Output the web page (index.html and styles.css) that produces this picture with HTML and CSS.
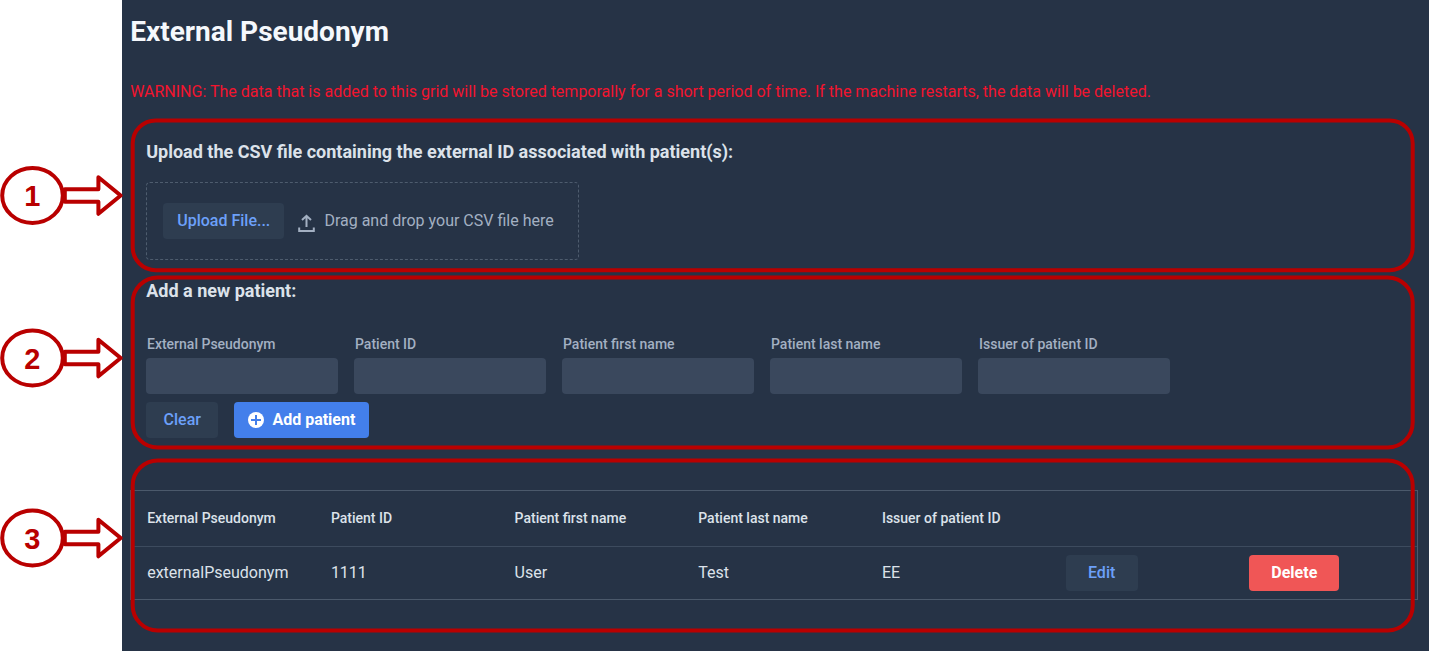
FILE: index.html
```
<!DOCTYPE html>
<html lang="en">
<head>
<meta charset="utf-8">
<title>External Pseudonym</title>
<link rel="stylesheet" href="styles.css">
</head>
<body>
<div class="page">
  <main class="panel">
    <h1 class="title">External Pseudonym</h1>
    <p class="warning">WARNING: The data that is added to this grid will be stored temporally for a short period of time. If the machine restarts, the data will be deleted.</p>
    <section class="upload">
      <h2 class="heading">Upload the CSV file containing the external ID associated with patient(s):</h2>
      <div class="dropzone">
        <button class="btn upload-btn">Upload File...</button>
        <svg class="upload-icon" width="18" height="18" viewBox="0 0 18 18" fill="none" stroke="currentColor" stroke-width="2"><path d="M8.5 13V2M4 6L8.5 1.8L13 6M1.2 13.4V17H15.8V13.4"/></svg>
        <span class="drop-label">Drag and drop your CSV file here</span>
      </div>
    </section>
    <section class="add">
      <h2 class="heading">Add a new patient:</h2>
      <div class="fields">
        <label class="field"><span>External Pseudonym</span><input class="input"></label>
        <label class="field"><span>Patient ID</span><input class="input"></label>
        <label class="field"><span>Patient first name</span><input class="input"></label>
        <label class="field"><span>Patient last name</span><input class="input"></label>
        <label class="field"><span>Issuer of patient ID</span><input class="input"></label>
      </div>
      <div class="actions">
        <button class="btn clear-btn">Clear</button>
        <button class="btn primary"><svg class="plus-icon" width="16" height="16" viewBox="0 0 16 16"><circle cx="8" cy="8" r="8" fill="#fff"/><path d="M8 3V13M3 8H13" stroke="#437feb" stroke-width="2"/></svg><span>Add patient</span></button>
      </div>
    </section>
    <div class="grid">
      <div class="row head"><span>External Pseudonym</span><span>Patient ID</span><span>Patient first name</span><span>Patient last name</span><span>Issuer of patient ID</span></div>
      <div class="row body"><span>externalPseudonym</span><span>1111</span><span>User</span><span>Test</span><span>EE</span><button class="btn edit-btn">Edit</button><button class="btn delete-btn">Delete</button></div>
    </div>
  </main>
  <svg class="annotations" width="1430" height="653" viewBox="0 0 1430 653">
    <defs>
      <g id="pointer">
        <ellipse cx="32.5" cy="0" rx="30.3" ry="27.4"/>
        <path d="M64.8 -6.3H98.4V-18.3L120.7 0L98.4 18.3V6.3H64.8Z"/>
      </g>
    </defs>
    <rect x="132.7" y="120.4" width="1280" height="149.8" rx="23"/>
    <rect x="132.7" y="277.4" width="1280" height="170" rx="25"/>
    <rect x="132.7" y="460.4" width="1280" height="170" rx="25"/>
    <use href="#pointer" y="195.5"/>
    <use href="#pointer" y="358"/>
    <use href="#pointer" y="538"/>
    <text x="32.3" y="206">1</text>
    <text x="32.3" y="369">2</text>
    <text x="32.3" y="549">3</text>
  </svg>
</div>
</body>
</html>
```
FILE: styles.css
```
body {
  margin: 0;
  background: #fff;
  font-family: Roboto, "Liberation Sans", sans-serif;
  font-size: 16px;
}

.page {
  position: relative;
  width: 1430px;
  height: 653px;
  overflow: hidden;
}

.panel {
  box-sizing: border-box;
  width: 1307px;
  height: 651px;
  margin-left: 122px;
  padding: 14px 11px 0 8px;
  background: #263346;
  color: #dce2ea;
}

.title {
  margin: 0;
  padding-left: 0.2px;
  color: #f5f8fc;
  font-size: 28px;
  font-weight: 700;
  line-height: 35px;
}

.warning {
  margin: 30px 0 0;
  padding-left: 0.2px;
  color: #f3142e;
  line-height: 26px;
}

.upload {
  padding: 35px 16px 0;
}

.heading {
  margin: 0;
  padding-left: 0.2px;
  font-size: 18px;
  font-weight: 700;
  line-height: 24px;
}

.dropzone {
  box-sizing: border-box;
  display: flex;
  align-items: center;
  width: 433px;
  height: 78px;
  margin-top: 18px;
  padding: 0 16px;
  border: 1px dashed #4e5c6e;
  border-radius: 4px;
  color: #a3b0c2;
}

.btn {
  box-sizing: border-box;
  display: flex;
  align-items: center;
  justify-content: center;
  height: 36px;
  padding: 0 0 2px;
  border: 0;
  border-radius: 4px;
  background: #2e3d50;
  color: #6ca0f9;
  font: 500 16px Roboto, "Liberation Sans", sans-serif;
}

.upload-btn {
  width: 121px;
  padding-left: 0.5px;
}

.upload-icon {
  margin: 4px 8.4px 0 14px;
}

.drop-label {
  padding-bottom: 2px;
}

.add {
  padding: 19px 16px 0;
}

.fields {
  display: flex;
  gap: 16px;
  margin-top: 32px;
}

.field {
  display: flex;
  flex-direction: column;
  gap: 5px;
  width: 192px;
  color: #a3b0c2;
  font-size: 14px;
  font-weight: 500;
  line-height: 18px;
}

.field span {
  padding-left: 1px;
}

.input {
  box-sizing: border-box;
  width: 100%;
  height: 36px;
  border: 0;
  border-radius: 4px;
  background: #3a485d;
}

.actions {
  display: flex;
  gap: 16px;
  margin-top: 8px;
}

.clear-btn,
.edit-btn {
  width: 72px;
}

.clear-btn {
  padding-left: 0.5px;
}

.primary {
  justify-content: flex-start;
  gap: 8.4px;
  width: 135px;
  padding-left: 14px;
  background: #437feb;
  color: #fff;
  font-weight: 700;
}

.plus-icon {
  flex: none;
  margin-top: 2px;
}

.grid {
  box-sizing: border-box;
  height: 110px;
  margin-top: 52px;
  border: 1px solid #4b596b;
}

.row {
  display: grid;
  grid-template-columns: repeat(7, 183.7px);
  align-items: center;
  padding-left: 16.2px;
}

.row span {
  padding-bottom: 2px;
}

.head {
  height: 55px;
  border-bottom: 1px solid #3d4b5e;
  font-size: 14px;
  font-weight: 500;
}

.body {
  height: 52px;
}

.delete-btn {
  width: 90px;
  background: #f05656;
  color: #fff;
  font-weight: 700;
}

.annotations {
  position: absolute;
  top: 0;
  left: 0;
  fill: none;
  stroke: #b90000;
  stroke-width: 4;
  stroke-linejoin: round;
}

.annotations text {
  fill: #b90000;
  stroke: none;
  font: 700 29px "Liberation Sans", Arial, sans-serif;
  text-anchor: middle;
}
```
